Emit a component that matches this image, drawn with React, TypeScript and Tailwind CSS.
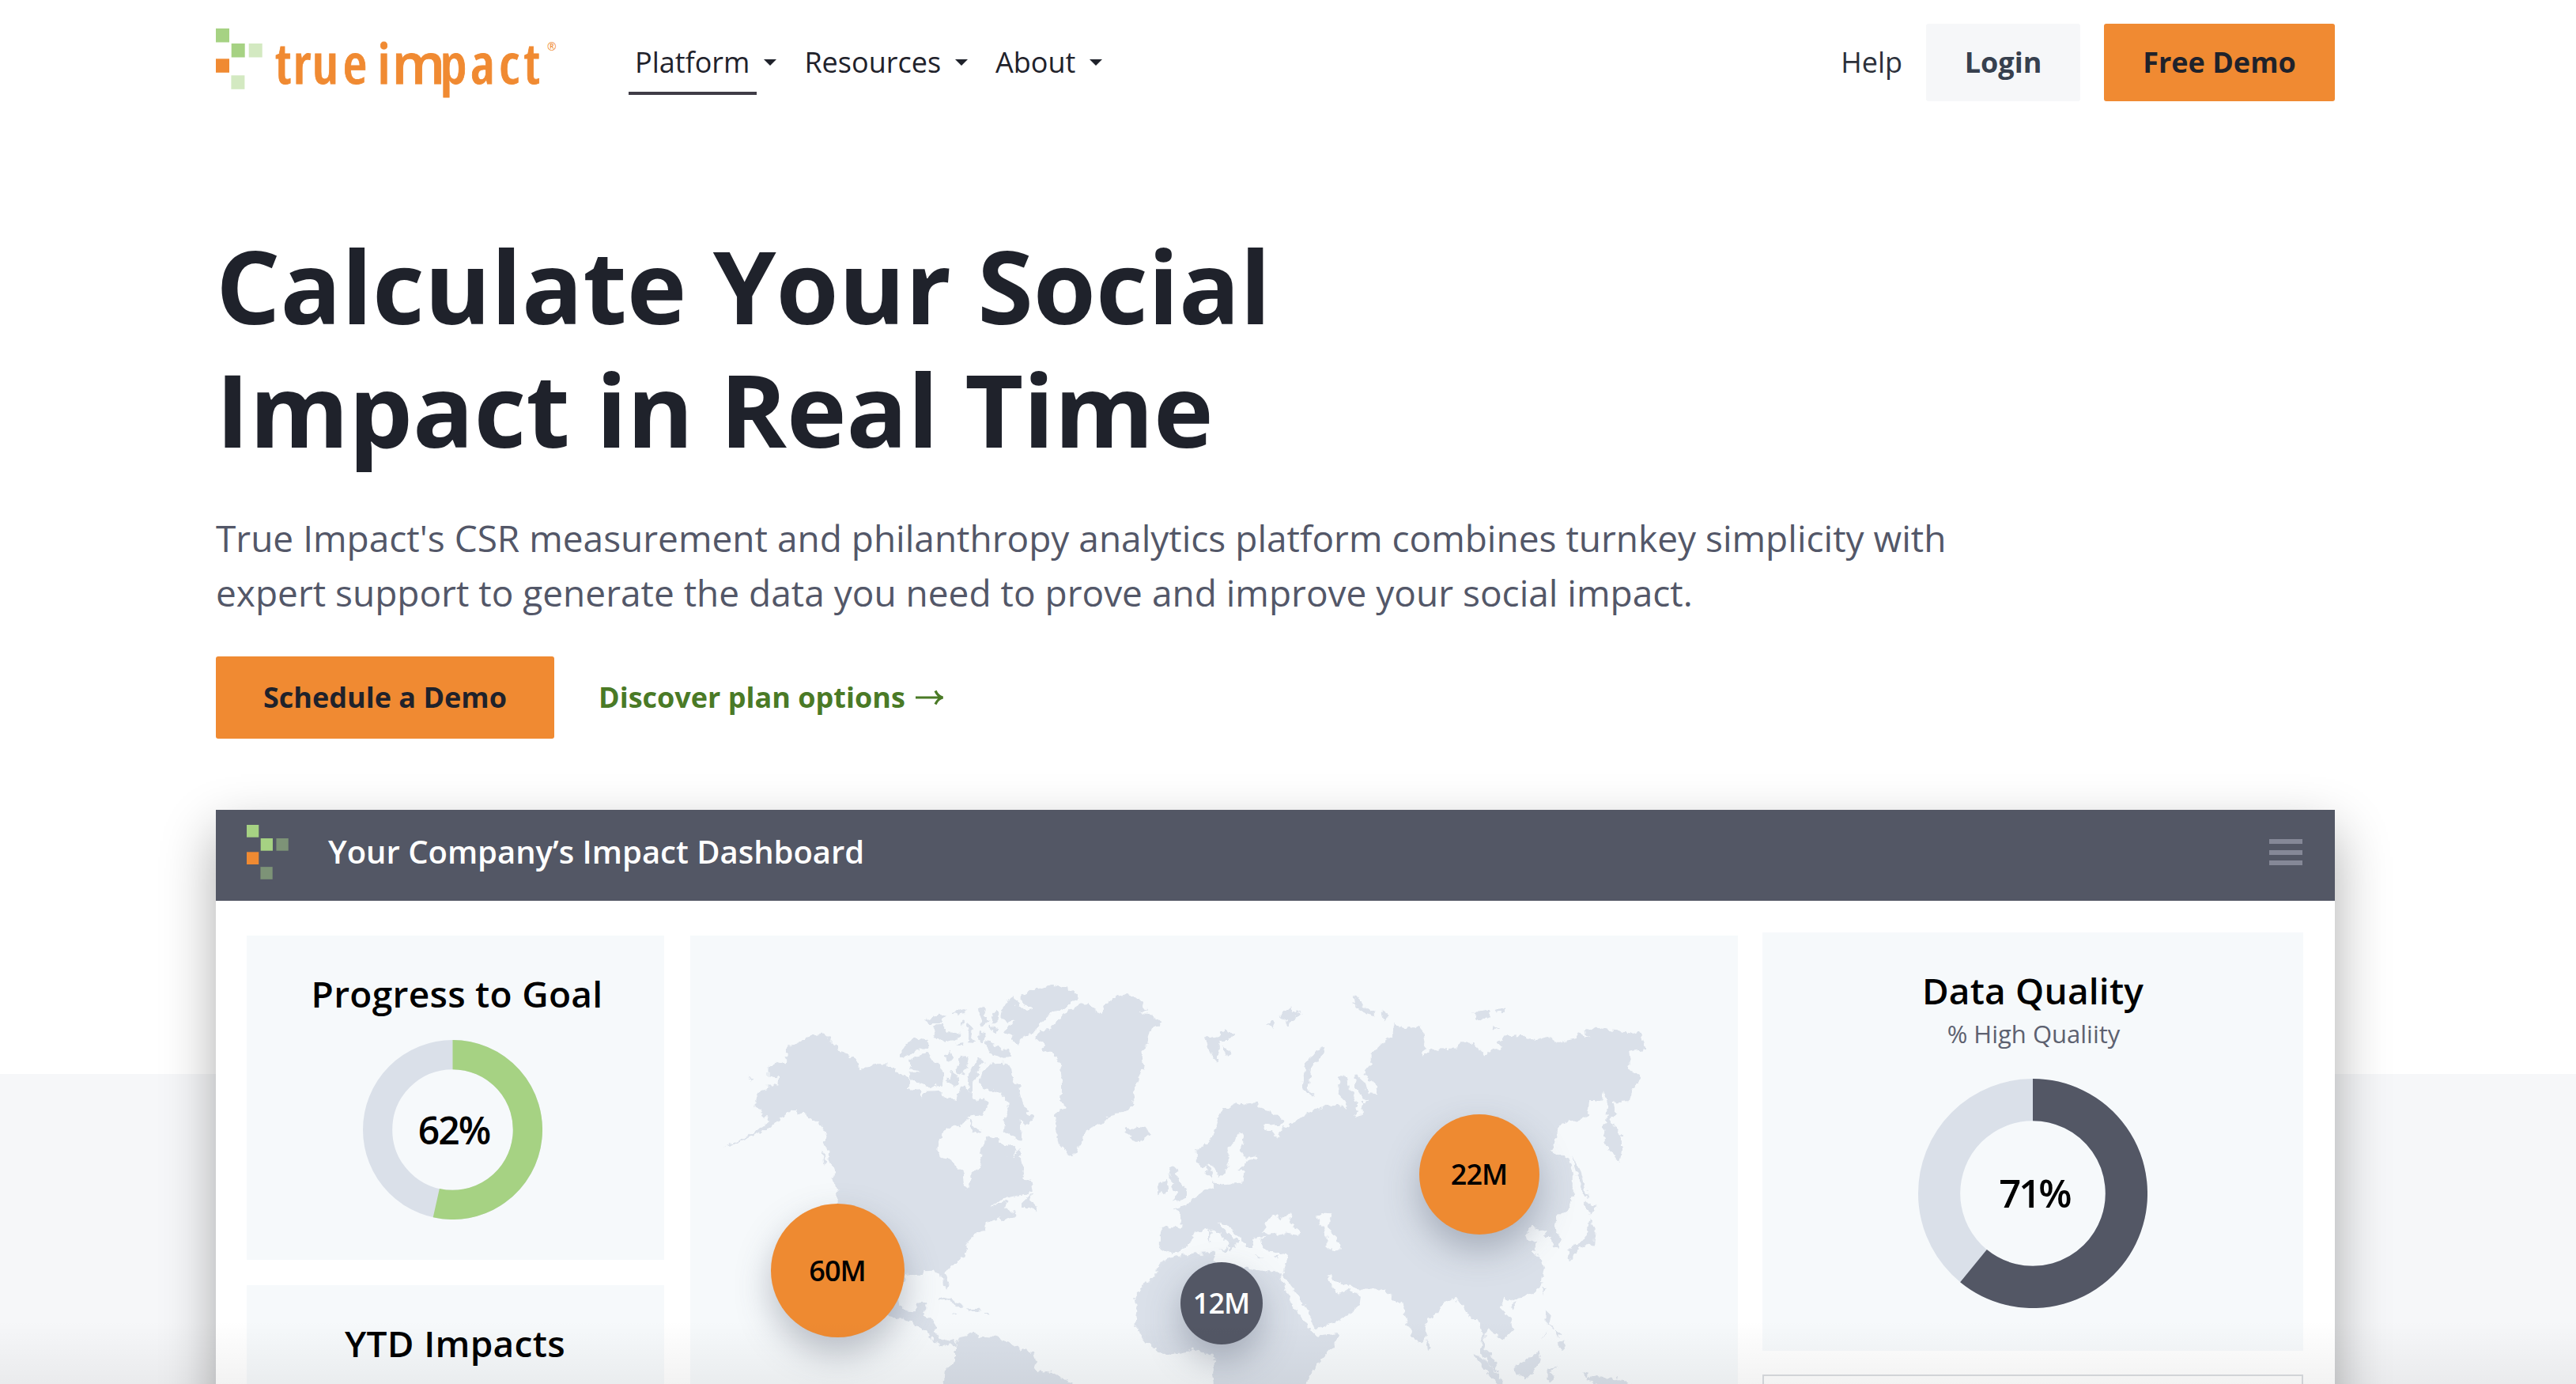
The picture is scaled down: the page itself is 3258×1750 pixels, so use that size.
const SQUARES = [
  { x: 0, y: 0, tone: "lime" },
  { x: 19.7, y: 19, tone: "lime" },
  { x: 41.7, y: 19, tone: "pale" },
  { x: 0, y: 38.3, tone: "orange" },
  { x: 19.4, y: 59.3, tone: "pale" },
];

function Squares({ width, height, pale, className }: { width: number; height: number; pale: string; className: string }) {
  const fill = (tone: string) => (tone === "lime" ? "#a6d283" : tone === "orange" ? "#f08a32" : pale);
  return (
    <svg className={className} width={width} height={height} viewBox="0 0 59 77" preserveAspectRatio="none" aria-hidden="true">
      {SQUARES.map((s) => (
        <rect key={s.x + "-" + s.y} x={s.x} y={s.y} width={17} height={17.5} fill={fill(s.tone)} />
      ))}
    </svg>
  );
}

const NAV = [
  { label: "Platform", active: true },
  { label: "Resources", active: false },
  { label: "About", active: false },
];

function Header() {
  return (
    <header className="flex h-[158px] items-start">
      <div className="flex w-[522px] shrink-0 pt-[36px]">
        <Squares width={59} height={77} pale="#d3e9c1" className="shrink-0" />
        <svg className="shrink-0" width={390} height={100} viewBox="332 36 390 100" role="img" aria-label="true impact">
          <text
            className="font-['Open_Sans'] text-[71px] font-semibold [font-stretch:84%]"
            fill="#f08a32"
            stroke="#f08a32"
            strokeWidth={0.8}
            y={106}
            x="348 370.500 394.500 433.500 468 477.500 495.500 556.500 595 631 662.500"
          >
            true i<tspan className="[font-stretch:92%]">m</tspan>pact
          </text>
          <text className="font-['Open_Sans'] text-[14px]" fill="#f08a32" x={692} y={64}>
            ®
          </text>
        </svg>
      </div>
      <nav className="flex pt-[37px] text-[36px] leading-[84px]">
        {NAV.map((item) => (
          <a key={item.label} className="mr-[27px] flex items-start">
            <span className="relative pr-[9px] pl-[8px]">
              {item.label}
              {item.active && <i className="absolute inset-x-0 bottom-[1px] h-[4px] bg-[#3f3c46]" />}
            </span>
            <svg className="mt-[38px] ml-[9px]" width={16} height={8} viewBox="0 0 16 8" aria-hidden="true">
              <path d="M0 0H16L8 8Z" fill="#1f222b" />
            </svg>
          </a>
        ))}
      </nav>
      <div className="ml-auto flex items-center pt-[30px]">
        <a className="mr-[30px] text-[36px] leading-[98px] text-[#2b303a]">Help</a>
        <a className="mr-[30px] h-[98px] w-[195px] rounded-[3px] bg-[#f6f7f9] text-center text-[36px] leading-[98px] font-bold text-[#37404e]">Login</a>
        <a className="h-[98px] w-[292px] rounded-[3px] bg-[#f08a32] text-center text-[36px] leading-[98px] font-bold">Free Demo</a>
      </div>
    </header>
  );
}

function Donut({ radius, hole, angle, color, label, className }: { radius: number; hole: number; angle: number; color: string; label: string; className: string }) {
  const mid = (radius + hole) / 2;
  const a = (angle * Math.PI) / 180;
  const x = radius + mid * Math.sin(a);
  const y = radius - mid * Math.cos(a);
  return (
    <div className={className}>
      <svg className="col-start-1 row-start-1" width={radius * 2} height={radius * 2} aria-hidden="true">
        <circle cx={radius} cy={radius} r={mid} fill="none" stroke="#dae0e9" strokeWidth={radius - hole} />
        <path
          d={`M${radius} ${radius - mid}A${mid} ${mid} 0 1 1 ${x} ${y}`}
          fill="none"
          stroke={color}
          strokeWidth={radius - hole}
        />
      </svg>
      <span className="col-start-1 row-start-1 pl-[4px]">{label}</span>
    </div>
  );
}

const WEST = [
  "M350 375L375 372 392 385 392 400 410 410 412 428 438 438 462 462 468 485 480 498 490 482 520 478 545 468 550 485 570 490 580 508 605 520 612 540 600 556 640 562 640 590 655 570 690 568 705 590 740 600 748 560 760 545 775 570 795 600 790 640 765 650 770 665 740 688 715 692 700 710 690 740 688 770 695 795 720 800 738 825 757 845 758 885 768 906 776 880 778 845 800 832 808 800 803 770 818 745 820 722 850 730 870 755 880 790 895 795 910 760 918 810 925 845 920 862 945 875 950 905 935 918 890 928 860 935 835 962 870 943 880 945 872 965 885 985 905 978 900 992 860 1012 858 1000 820 1018 818 1040 785 1062 765 1085 768 1110 750 1140 720 1165 708 1185 718 1225 714 1243 702 1225 698 1190 680 1180 650 1182 645 1195 615 1192 600 1195 590 1230 580 1270 582 1295 600 1318 625 1320 632 1292 655 1286 655 1310 645 1340 680 1352 685 1362 680 1390 692 1415 712 1424 730 1415 738 1430 732 1440 720 1430 705 1440 680 1425 655 1385 625 1368 600 1345 575 1345 550 1335 500 1290 470 1200 410 1100 405 1000 410 945 412 900 395 865 405 850 400 830 385 800 390 770 375 750 380 710 360 680 340 665 318 640 300 650 300 630 285 630 265 650 250 660 230 685 200 705 170 722 130 745 95 762 130 738 175 712 200 690 222 670 218 655 195 655 205 635 185 620 188 585 200 565 220 558 218 545 248 545 250 520 220 518 220 485 245 470 272 480 275 460 268 445 270 408 285 410 310 400 325 382Z",
  "M583 455L585 430 600 405 625 382 658 395 660 415 625 430 600 450Z",
  "M610 500L640 505 610 485 608 465 630 445 660 438 674 462 690 480 705 500 700 545 665 552 640 540 610 530Z",
  "M708 440L722 430 728 462 712 468ZM735 485L752 445 772 450 768 480 758 512 740 505ZM722 500L715 535 735 555 745 535 738 510Z",
  "M652 325L690 305 712 310 690 335 665 335ZM672 345L700 335 712 365 750 370 740 392 705 402 685 385Z",
  "M728 298L765 283 762 300 740 305ZM800 278L820 285 815 310 832 325 810 345 803 315ZM768 330L785 350 778 380 790 400 768 398ZM835 310L850 290 852 330 840 340ZM750 330L762 325 758 345ZM800 365L822 372 815 400 798 390ZM740 405L760 400 756 415ZM828 345L850 350 845 370Z",
  "M820 395L850 415 885 430 892 450 860 455 830 435Z",
  "M915 240L950 222 1000 205 1045 212 1068 235 1070 255 1040 280 1000 300 975 330 958 345 950 370 925 378 905 405 890 395 895 375 870 370 885 345 900 325 880 330 862 320 865 290 880 255 900 240 905 272 935 292 950 285 915 265Z",
  "M770 560L775 500 800 452 815 468 800 490 785 540 785 585ZM808 500L835 472 870 470 890 490 895 530 912 550 920 600 930 635 952 660 932 685 915 665 918 740 890 720 868 700 872 660 882 630 878 600 850 565 815 560 800 540Z",
  "M800 590L825 605 818 635 798 652 785 640ZM772 655L790 690 810 702 785 715ZM868 755L890 745 905 765 890 798 872 785Z",
  "M965 365L1000 350 1020 320 1050 290 1075 270 1100 268 1120 290 1145 300 1150 265 1185 240 1210 235 1240 248 1265 290 1240 302 1280 310 1303 330 1275 355 1265 400 1252 430 1255 480 1240 520 1235 545 1225 570 1228 600 1215 625 1190 640 1160 652 1140 680 1095 700 1082 745 1060 785 1040 775 1020 745 1010 690 1015 640 1040 620 1018 600 1030 560 1025 480 1005 440 970 430 985 410 960 390Z",
  "M1203 690L1222 700 1235 688 1262 692 1271 715 1240 742 1215 732 1222 718 1205 712Z",
  "M918 950L945 918 940 940 960 955 962 978 945 965 918 965Z",
  "M685 1275L705 1270 735 1282 762 1303 745 1305 710 1283ZM765 1310L800 1308 808 1320 780 1322ZM730 1320L745 1323 735 1328ZM818 1322L830 1322 828 1328 818 1328Z",
  "M735 1440L745 1412 790 1388 800 1405 850 1408 875 1420 915 1448 948 1460 958 1495 952 1520 1000 1530 1060 1568 1080 1590 700 1590 710 1520 735 1490Z",
  "M168 518L180 525 175 538ZM370 770L380 800 375 825ZM393 862L415 885 425 912 412 908Z",
];

const EAST = [
  "M155 830L172 825 168 850 180 875 198 900 195 930 160 945 175 915 158 900 165 880 152 860ZM125 885L148 872 150 905 125 925Z",
  "M130 1035L182 1032 184 1000 175 975 160 970 195 960 215 930 240 905 262 895 262 870 245 850 248 820 258 830 262 880 290 885 335 880 340 840 325 835 345 805 375 800 370 790 340 795 330 765 340 710 325 705 315 740 300 765 300 810 290 850 275 865 265 825 255 815 235 830 222 810 222 770 250 745 265 710 275 650 290 630 330 605 345 612 370 605 375 625 400 632 435 665 430 685 385 680 390 700 410 705 420 725 435 695 465 670 500 640 545 612 575 615 600 630 590 600 575 580 573 515 592 520 600 560 615 600 620 640 612 658 632 650 630 600 650 600 635 590 612 545 615 510 640 540 645 570 670 575 665 545 635 505 655 470 655 440 680 405 705 380 710 335 740 355 770 345 785 370 788 405 780 450 800 425 870 420 880 398 905 400 935 445 945 430 975 420 965 400 990 380 1030 375 1060 395 1095 380 1115 400 1160 388 1168 370 1200 385 1180 365 1210 350 1265 360 1300 370 1315 360 1325 375 1335 425 1295 430 1298 460 1290 490 1325 520 1300 560 1295 600 1255 605 1260 650 1245 660 1275 720 1275 770 1270 812 1245 770 1228 720 1235 660 1240 620 1230 565 1225 600 1195 600 1190 655 1115 685 1112 740 1100 775 1145 795 1155 850 1155 920 1140 975 1115 990 1110 1030 1125 1075 1120 1105 1105 1100 1102 1065 1085 1065 1088 1040 1070 1045 1055 1022 1035 1060 1045 1075 1068 1080 1055 1110 1075 1145 1082 1175 1075 1230 1055 1260 1020 1275 1000 1285 985 1275 975 1310 1000 1345 1005 1385 980 1420 965 1400 945 1380 935 1400 935 1450 960 1480 968 1530 945 1500 925 1455 930 1395 915 1340 900 1345 885 1310 865 1270 835 1290 820 1320 790 1355 788 1410 770 1432 745 1370 728 1285 715 1290 690 1245 620 1245 600 1225 580 1230 560 1205 545 1192 555 1235 575 1262 600 1240 628 1270 625 1300 585 1345 515 1383 505 1340 475 1265 435 1195 448 1130 415 1118 385 1105 380 1075 395 1062 360 1068 362 1100 345 1100 325 1060 290 1020 275 1010 285 1035 325 1080 318 1090 308 1112 300 1108 303 1085 265 1040 245 1040 215 1050 208 1080 180 1115 150 1120 130 1105Z",
  "M150 1135L195 1125 268 1118 262 1150 300 1165 345 1172 400 1185 428 1185 432 1215 460 1300 505 1385 522 1405 573 1395 560 1440 520 1500 480 1590 265 1590 260 1530 268 1475 215 1450 140 1468 100 1430 70 1375 75 1300 68 1275 90 1225 122 1200 125 1165Z",
  "M240 385L275 380 290 355 316 372 300 395 280 395 275 420 273 470 255 435ZM285 410L310 440 295 448Z",
  "M540 418L515 430 490 480 482 560 515 590 500 560 505 490 530 445Z",
  "M612 242L630 260 640 285 665 295 665 312 635 300 615 275ZM680 288L700 305 685 328Z",
  "M440 295L455 275 458 300 475 290 478 305 455 325 450 345 440 320 428 312ZM395 335L415 325 410 348Z",
  "M905 298L945 288 950 308 925 328ZM960 285L985 285 985 294 965 296ZM955 343L970 352 958 358Z",
  "M1185 945L1218 965 1205 972 1200 988 1185 970ZM1195 1000L1208 1040 1205 1090 1180 1095 1165 1110 1148 1150 1140 1110 1165 1090 1190 1050Z",
  "M1152 785L1175 850 1192 930 1183 925 1162 850Z",
  "M790 1415L802 1440 795 1455ZM1080 1238L1088 1240 1083 1268ZM998 1297L1014 1290 1005 1315Z",
  "M1088 1315L1100 1330 1096 1365 1110 1375 1105 1380 1088 1355ZM1110 1385L1125 1395 1118 1410ZM1115 1430L1132 1415 1136 1445 1125 1452ZM1075 1415L1088 1385 1085 1400Z",
  "M1010 1500L1045 1485 1070 1450 1075 1480 1055 1530 1035 1550 1015 1535Z",
  "M905 1462L935 1485 975 1545 985 1590 960 1560 925 1500ZM1090 1520L1120 1512 1100 1525 1110 1545 1098 1560 1090 1550ZM1180 1525L1195 1530 1190 1550 1210 1540 1260 1550 1300 1568 1300 1590 1250 1580 1190 1560Z",
  "M250 1043L257 1043 256 1085 250 1085ZM278 1108L298 1106 294 1120ZM365 1130L385 1132 375 1137ZM410 1135L425 1128 418 1140Z",
];

const SEAS = [
  "M400 1000L415 985 430 1005 455 983 450 1010 480 1045 475 1060 440 1052 400 1060 385 1050Z",
  "M520 1000L535 983 557 985 550 1010 545 1035 570 1070 577 1110 545 1105 545 1065Z",
];

function WorldMap() {
  return (
    <svg className="absolute inset-0" width={1325} height={567} viewBox="872.5 1183 1325 567" aria-hidden="true">
      <filter id="coast" x="0" y="0" width="100%" height="100%" colorInterpolationFilters="sRGB">
        <feTurbulence type="fractalNoise" baseFrequency="0.14" numOctaves="2" seed="4" result="n" />
        <feDisplacementMap in="SourceGraphic" in2="n" scale="9" xChannelSelector="R" yChannelSelector="G" />
        <feGaussianBlur stdDeviation="0.6" />
      </filter>
      <g fill="#dae0e9" filter="url(#coast)">
        <g transform="translate(870 1170) scale(.45918 .3699)">
          {WEST.map((d) => (
            <path key={d.slice(0, 16)} d={d} />
          ))}
        </g>
        <g transform="translate(1400 1170) scale(.5102 .3699)">
          {EAST.map((d) => (
            <path key={d.slice(0, 16)} d={d} />
          ))}
          {SEAS.map((d) => (
            <path key={d.slice(0, 16)} d={d} fill="#f6f9fb" />
          ))}
        </g>
      </g>
    </svg>
  );
}

const BUBBLE = "absolute grid place-items-center rounded-full text-[36px] font-[640] tracking-[-1px] shadow-[0_20px_44px_rgba(70,78,100,0.34)]";

function Dashboard() {
  return (
    <section className="mt-[90px] h-[900px] bg-white shadow-[0_28px_64px_rgba(0,0,0,0.32)]">
      <div className="flex h-[115px] items-start bg-[#535765] pr-[41px] pl-[39px]">
        <Squares width={53} height={69} pale="#7d9377" className="mt-[19px]" />
        <h2 className="ml-[50px] text-[40px] leading-[106px] font-[630] text-white">Your Company’s Impact Dashboard</h2>
        <div className="mt-[37px] ml-auto flex flex-col gap-[7.5px]">
          <i className="block h-[6px] w-[42px] bg-[#858897]" />
          <i className="block h-[6px] w-[42px] bg-[#858897]" />
          <i className="block h-[6px] w-[42px] bg-[#858897]" />
        </div>
      </div>
      <div className="flex items-start pr-[40px] pl-[39px] text-black">
        <div className="flex w-[528px] flex-col gap-[32px] pt-[44px]">
          <div className="flex h-[410px] flex-col items-center bg-[#f6f9fb] pt-[41px]">
            <h3 className="ml-[4px] text-[46px] leading-[64px] font-[640] tracking-[0.3px]">Progress to Goal</h3>
            <Donut
              radius={113.5}
              hole={76.3}
              angle={192.6}
              color="#a6d283"
              label="62%"
              className="mt-[27px] -ml-[8px] grid place-items-center text-[48px] font-[640] tracking-[-2px]"
            />
          </div>
          <div className="flex h-[410px] flex-col items-center bg-[#f6f9fb] pt-[41px]">
            <h3 className="ml-[-1px] text-[46px] leading-[64px] font-[640] tracking-[0.3px]">YTD Impacts</h3>
          </div>
        </div>
        <div className="relative mt-[44px] ml-[32.5px] h-[700px] w-[1325px] overflow-hidden bg-[#f6f9fb]">
          <WorldMap />
          <div className={BUBBLE + " top-[339px] left-[102px] size-[169px] bg-[#ee8a31]"}>60M</div>
          <div className={BUBBLE + " top-[226px] left-[922px] size-[152px] bg-[#ee8a31]"}>22M</div>
          <div className={BUBBLE + " top-[413px] left-[620px] size-[104px] bg-[#535765] text-white"}>12M</div>
        </div>
        <div className="ml-[31.5px] flex w-[684px] flex-col gap-[30px] pt-[40px]">
          <div className="flex h-[529px] flex-col items-center bg-[#f6f9fb] pt-[41px]">
            <h3 className="text-[46px] leading-[64px] font-[640] tracking-[0.2px]">Data Quality</h3>
            <p className="pt-[1px] pl-[2px] text-[31px] leading-[44px] text-[#5d6170]">% High Qualiity</p>
            <Donut
              radius={145}
              hole={91.8}
              angle={219.3}
              color="#535765"
              label="71%"
              className="mt-[35px] grid place-items-center text-[49px] font-[640] tracking-[-3px]"
            />
          </div>
          <div className="h-[200px] border-2 border-[#dadde1] bg-white" />
        </div>
      </div>
    </section>
  );
}

export default function App() {
  return (
    <div className="relative h-[1750px] overflow-hidden bg-white pr-[32px] font-['Open_Sans',sans-serif] text-[#1f222b]">
      <div className="absolute inset-x-0 bottom-0 h-[392px] bg-[#f6f7f9]" />
      <div className="relative mx-auto w-[2680px]">
        <Header />
        <main className="pt-[125px]">
          <h1 className="text-[128px] leading-[156px] font-bold">
            Calculate Your Social
            <br />
            Impact in Real Time
          </h1>
          <p className="mt-[51px] text-[46px] leading-[69px] text-[#535768]">
            True Impact's CSR measurement and philanthropy analytics platform combines turnkey simplicity with
            <br />
            expert support to generate the data you need to prove and improve your social impact.
          </p>
          <div className="mt-[46px] flex h-[104px] items-center text-[36px] leading-[104px] font-bold">
            <a className="w-[428px] rounded-[3px] bg-[#f08a32] text-center">Schedule a Demo</a>
            <a className="ml-[56px] flex items-center text-[#4a7a26]">
              Discover plan options
              <svg className="ml-[12px]" width={38} height={20} viewBox="0 0 38 20" fill="none" stroke="#4a7a26" strokeWidth={3.2} aria-hidden="true">
                <path d="M1 10H34M26 1.5C28 6 31 9 35.500 10C31 11 28 14 26 18.500" />
              </svg>
            </a>
          </div>
          <Dashboard />
        </main>
      </div>
      <div className="absolute inset-x-0 bottom-0 h-[80px] bg-gradient-to-b from-transparent to-black/5" />
    </div>
  );
}
